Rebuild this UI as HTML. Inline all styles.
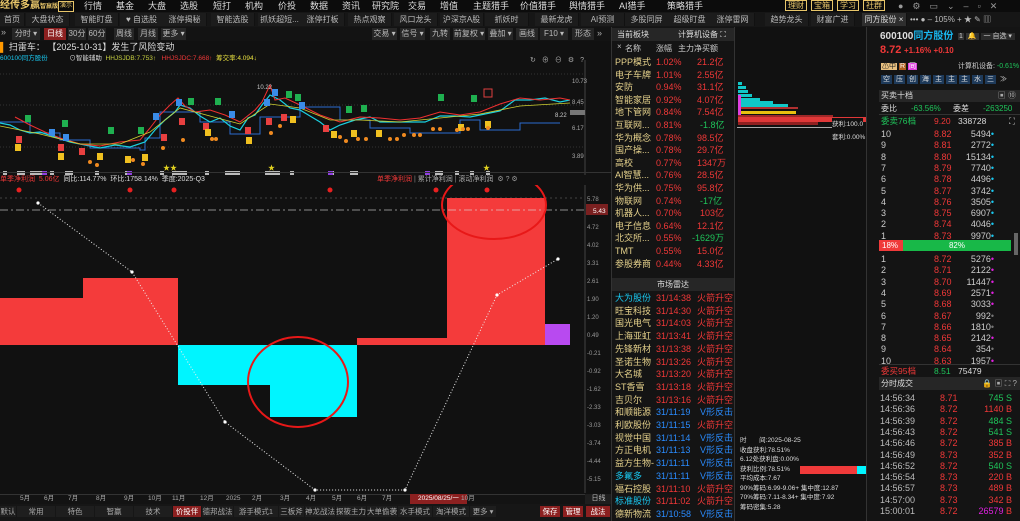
<!DOCTYPE html><html><head><meta charset="utf-8"><style>
*{margin:0;padding:0;box-sizing:border-box}
body{width:1020px;height:521px;background:#111;overflow:hidden;position:relative;font-family:"Liberation Sans","Noto Sans CJK SC",sans-serif;font-size:9px;color:#ccc}
.a{position:absolute;white-space:nowrap}
.r{color:#f03838}.g{color:#1fc45a}.c{color:#19c8f0}.y{color:#e6d28c}.w{color:#ddd}.b{color:#2a8cff}
.tab{position:absolute;top:13px;height:13px;background:#1c1c1c;color:#bbb;font-size:8px;line-height:13px;text-align:center;border-right:1px solid #111;width:44px}
.btn{position:absolute;top:28px;height:12px;background:#262626;color:#bbb;font-size:8px;line-height:12px;text-align:center}
.row{position:absolute;left:0;width:100%;height:12px;line-height:12px;font-size:9px}
.bt{position:absolute;top:506px;height:11px;background:#1e1e1e;color:#aaa;font-size:7.5px;line-height:11px;text-align:center}
.m{position:absolute;top:0;line-height:12px;font-size:9px;color:#ddd}
</style></head><body>
<!-- top menu -->
<div class="a" style="left:0;top:0;width:1020px;height:12px;background:#0c0c0c"></div>
<div class="a y" style="left:0;top:0;font-size:10px;font-weight:bold;line-height:12px;color:#e8c66a">经传多赢<span style="font-size:6px">智赢版</span></div>
<div class="a" style="top:1px;left:58px;border:1px solid #e8c66a;font-size:6px;color:#e8c66a;padding:0 1px;line-height:9px">演示</div>
<span class="m" style="left:84px">行情</span><span class="m" style="left:116px">基金</span><span class="m" style="left:148px">大盘</span><span class="m" style="left:180px">选股</span><span class="m" style="left:213px">短打</span><span class="m" style="left:245px">机构</span><span class="m" style="left:278px">价投</span><span class="m" style="left:310px">数据</span><span class="m" style="left:342px">资讯</span><span class="m" style="left:372px">研究院</span><span class="m" style="left:408px">交易</span><span class="m" style="left:440px">增值</span>
<span class="m y" style="left:473px">主题猎手</span><span class="m y" style="left:520px">价值猎手</span><span class="m y" style="left:569px">舆情猎手</span><span class="m y" style="left:619px">AI猎手</span><span class="m y" style="left:667px">策略猎手</span>
<div class="a" style="left:785px;top:1px;font-size:8px;color:#e8c66a;line-height:9px"><span style="border:1px solid #e8c66a;padding:0 2px;margin-right:4px">理财</span><span style="border:1px solid #e8c66a;padding:0 2px;margin-right:4px">宝箱</span><span style="border:1px solid #e8c66a;padding:0 2px;margin-right:4px">学习</span><span style="border:1px solid #e8c66a;padding:0 2px">社群</span></div>
<div class="a" style="left:898px;top:0;color:#999;font-size:9px;line-height:12px;letter-spacing:9px">●⚙▭⌄–▫✕</div>
<!-- tabs -->
<div class="a" style="left:0;top:12px;width:1020px;height:15px;background:#161616"></div>
<div class="tab" style="left:0;width:25px">首页</div><div class="tab" style="left:26px">大盘状态</div><div class="tab" style="left:75px">智能盯盘</div><div class="tab" style="left:120px">♥ 自选股</div><div class="tab" style="left:163px">涨停揭秘</div><div class="tab" style="left:211px">智能选股</div><div class="tab" style="left:258px">抓妖超短...</div><div class="tab" style="left:301px">涨停打板</div><div class="tab" style="left:348px">热点观察</div><div class="tab" style="left:394px">风口龙头</div><div class="tab" style="left:440px">沪深京A股</div><div class="tab" style="left:485px">抓妖时</div><div class="tab" style="left:535px">最新龙虎</div><div class="tab" style="left:581px">AI预测</div><div class="tab" style="left:625px">多股同屏</div><div class="tab" style="left:668px">超级盯盘</div><div class="tab" style="left:711px">涨停雷网</div><div class="tab" style="left:765px">趋势龙头</div><div class="tab" style="left:811px">财富广进</div>
<div class="tab" style="left:862px;width:45px;background:#2e2e2e;color:#ddd">同方股份 ×</div>
<div class="a" style="left:910px;top:13px;font-size:8px;color:#bbb;line-height:13px">••• ● – 105% + ★ ✎ ▥</div>
<!-- toolbar -->
<div class="a" style="left:0;top:27px;width:612px;height:14px;background:#131313"></div>
<div class="a" style="left:1px;top:27px;color:#aaa;font-size:9px">»</div>
<div class="btn" style="left:12px;width:28px">分时 ▾</div><div class="btn" style="left:44px;width:22px;background:#8c2020;color:#fff">日线</div><div class="btn" style="left:68px;width:18px">30分</div><div class="btn" style="left:88px;width:18px">60分</div><div class="btn" style="left:114px;width:20px">周线</div><div class="btn" style="left:138px;width:20px">月线</div><div class="btn" style="left:161px;width:25px">更多 ▾</div>
<div class="btn" style="left:372px;width:25px">交易 ▾</div><div class="btn" style="left:400px;width:25px">信号 ▾</div><div class="btn" style="left:430px;width:20px">九转</div><div class="btn" style="left:453px;width:32px">前复权 ▾</div><div class="btn" style="left:488px;width:25px">叠加 ▾</div><div class="btn" style="left:516px;width:22px">画线</div><div class="btn" style="left:540px;width:28px">F10 ▾</div><div class="btn" style="left:572px;width:22px">形态</div><div class="a" style="left:597px;top:28px;color:#aaa">»</div>
<div class="a" style="left:0;top:41px;font-size:9px;line-height:12px;color:#ddd"><span style="color:#f90">▌</span> 扫雷车： 【2025-10-31】发生了风险变动</div>
<div class="a" style="left:0;top:55px;font-size:6.5px;line-height:8px"><span class="c">600100同方股份</span> &nbsp;&nbsp;&nbsp;&nbsp;&nbsp;&nbsp;&nbsp;&nbsp;&nbsp;&nbsp;&nbsp;<span class="w">⊙智能辅助</span> &nbsp;<span style="color:#c8d040">HHJSJDB:7.753↑</span> &nbsp;&nbsp;<span class="r">HHJSJDC:7.668↑</span> &nbsp;<span style="color:#e8e040">筹交率:4.094↓</span></div>
<div class="a" style="left:530px;top:55px;color:#aaa;font-size:7px;letter-spacing:6px">↻⊕⊖⚙?</div>
<!-- upper chart -->
<svg class="a" style="left:0;top:60px" width="612" height="115">
<line x1="0" y1="87" x2="585" y2="87" stroke="#333" stroke-dasharray="1 2"/>
<line x1="0" y1="14" x2="585" y2="14" stroke="#333" stroke-dasharray="1 2"/>
<line x1="0" y1="45" x2="585" y2="45" stroke="#333" stroke-dasharray="1 2"/>
<line x1="585" y1="0" x2="585" y2="115" stroke="#444"/>
<polyline fill="none" stroke="#2a6cd0" stroke-width="1" points="0,62 30,62 30,73 60,73 60,80 90,80 90,88 140,88 140,90 145,90 145,78 160,78 160,52 200,52 200,62 230,62 230,74 260,74 260,57 300,57 300,47 340,47 340,60 370,60 370,68 410,68 410,73 460,73 460,60 480,60 480,70 520,70 520,63 560,63"/>
<polyline fill="none" stroke="#1ad0e0" stroke-width="1.2" points="0,63 10,65 20,70 30,73 40,72 55,77 70,82 85,85 100,88 115,85 130,87 145,82 155,70 165,60 175,52 180,45 190,48 200,56 210,62 220,58 230,66 240,70 248,58 255,55 262,45 270,35 280,40 290,48 300,50 310,56 320,62 330,70 340,65 355,60 370,57 380,62 395,62 410,62 425,62 440,56 455,56 470,57 485,54 500,51 515,40 530,40 545,38 560,42 570,40"/>
<polyline fill="none" stroke="#f03030" stroke-width="1" points="15,57 30,65 45,72 60,78 80,84 100,86 120,82 140,80 150,68 160,55 170,45 178,38 185,46 195,52 210,50 225,55 240,62 255,50 262,42 270,25 275,40 285,38 300,45 320,55 340,62 360,57 380,58 400,60 420,58 440,52 460,55 480,52 500,44 520,38 540,40 560,38 570,40"/>
<polyline fill="none" stroke="#d0d030" stroke-width="0.8" points="0,66 40,74 80,84 120,84 150,72 180,48 210,56 240,64 270,44 300,48 330,60 360,60 400,62 440,58 480,54 520,46 570,43"/>
<text x="572" y="23" fill="#aaa" font-size="6">10.73</text><text x="572" y="44" fill="#aaa" font-size="6">8.45</text><text x="572" y="70" fill="#aaa" font-size="6">6.17</text><text x="572" y="98" fill="#aaa" font-size="6">3.89</text>
<rect x="570" y="50" width="15" height="5" fill="#777"/>
<text x="555" y="57" fill="#ccc" font-size="6">8.22</text>
<text x="257" y="29" fill="#ccc" font-size="6">10.22</text>
<g>
<g fill="#1fb050"><rect x="25" y="55" width="6" height="7"/><rect x="62" y="60" width="6" height="7"/><rect x="108" y="67" width="6" height="7"/><rect x="138" y="67" width="6" height="7"/><rect x="188" y="38" width="6" height="7"/><rect x="215" y="38" width="6" height="7"/><rect x="286" y="31" width="6" height="7"/><rect x="295" y="34" width="6" height="7"/><rect x="346" y="46" width="6" height="7"/><rect x="361" y="45" width="6" height="7"/><rect x="438" y="34" width="6" height="7"/><rect x="471" y="35" width="6" height="7"/></g>
<g fill="#3a8ce8"><rect x="49" y="69" width="6" height="7"/><rect x="63" y="74" width="6" height="7"/><rect x="153" y="53" width="6" height="7"/><rect x="176" y="39" width="6" height="7"/><rect x="229" y="51" width="6" height="7"/><rect x="264" y="39" width="6" height="7"/><rect x="272" y="29" width="6" height="7"/><rect x="299" y="42" width="6" height="7"/></g>
<g fill="#e84040"><rect x="16" y="76" width="6" height="7"/><rect x="58" y="84" width="6" height="7"/><rect x="79" y="88" width="6" height="7"/><rect x="161" y="74" width="6" height="7"/><rect x="179" y="58" width="6" height="7"/><rect x="203" y="63" width="6" height="7"/><rect x="245" y="67" width="6" height="7"/><rect x="266" y="58" width="6" height="7"/><rect x="281" y="54" width="6" height="7"/><rect x="323" y="65" width="6" height="7"/></g>
<g fill="#f0c020"><rect x="15" y="84" width="6" height="7"/><rect x="58" y="93" width="6" height="7"/><rect x="97" y="93" width="6" height="7"/><rect x="125" y="96" width="6" height="7"/><rect x="142" y="94" width="6" height="7"/><rect x="205" y="69" width="6" height="7"/><rect x="246" y="77" width="6" height="7"/><rect x="290" y="56" width="6" height="7"/><rect x="331" y="71" width="6" height="7"/><rect x="351" y="70" width="6" height="7"/><rect x="376" y="70" width="6" height="7"/><rect x="458" y="64" width="6" height="7"/><rect x="485" y="61" width="6" height="7"/></g>
</g>
<g fill="#f08a20"><circle cx="90" cy="102" r="2"/><circle cx="97" cy="105" r="2"/><circle cx="133" cy="100" r="2"/><circle cx="143" cy="104" r="2"/><circle cx="163" cy="88" r="2"/><circle cx="183" cy="80" r="2"/><circle cx="212" cy="79" r="2"/><circle cx="216" cy="79" r="2"/><circle cx="271" cy="73" r="2"/><circle cx="280" cy="66" r="2"/><circle cx="340" cy="77" r="2"/><circle cx="346" cy="81" r="2"/><circle cx="358" cy="79" r="2"/><circle cx="366" cy="79" r="2"/><circle cx="390" cy="79" r="2"/><circle cx="397" cy="79" r="2"/><circle cx="404" cy="75" r="2"/><circle cx="414" cy="75" r="2"/><circle cx="420" cy="75" r="2"/><circle cx="433" cy="69" r="2"/><circle cx="440" cy="69" r="2"/><circle cx="457" cy="70" r="2"/><circle cx="463" cy="69" r="2"/><circle cx="468" cy="69" r="2"/><circle cx="488" cy="68" r="2"/></g>
<rect x="484" y="29" width="8" height="8" fill="none" stroke="#e04040"/>
<g fill="#e0d020" font-size="7"><text x="163" y="110">★★</text><text x="268" y="110">★</text><text x="483" y="110">★</text></g>
<g fill="#bbb"><rect x="3" y="111" width="4" height="4"/><rect x="17" y="111" width="8" height="4"/><rect x="30" y="111" width="15" height="4"/><rect x="50" y="111" width="4" height="4"/><rect x="65" y="111" width="8" height="4"/><rect x="95" y="111" width="4" height="4"/><rect x="125" y="111" width="4" height="4"/><rect x="160" y="111" width="4" height="4"/><rect x="172" y="111" width="15" height="4"/><rect x="205" y="111" width="4" height="4"/><rect x="225" y="111" width="15" height="4"/><rect x="265" y="111" width="15" height="4"/><rect x="290" y="111" width="4" height="4"/><rect x="330" y="111" width="4" height="4"/><rect x="350" y="111" width="8" height="4"/><rect x="435" y="111" width="8" height="4"/><rect x="455" y="111" width="4" height="4"/><rect x="470" y="111" width="4" height="4"/><rect x="486" y="111" width="4" height="4"/></g>
<g fill="#9040e0"><rect x="42" y="111" width="5" height="4"/><rect x="127" y="111" width="5" height="4"/><rect x="328" y="111" width="5" height="4"/><rect x="425" y="111" width="5" height="4"/></g>
</svg>
<div class="a" style="left:0;top:172px;width:612px;height:1px;background:#333"></div>
<!-- lower chart -->
<div class="a" style="left:0;top:175px;font-size:7px;line-height:9px"><span class="r">单季净利润</span> &nbsp;<span class="r">5.06亿</span> &nbsp;<span class="w">同比:114.77% &nbsp;环比:1758.14% &nbsp;季度:2025-Q3</span></div>
<div class="a" style="left:377px;top:175px;font-size:7px;line-height:9px"><span class="r">单季净利润</span> <span style="color:#888">|</span> <span style="color:#aaa">累计净利润</span> <span style="color:#888">|</span> <span style="color:#aaa">滚动净利润</span> &nbsp;<span style="color:#999">⚙ ? ⚙</span></div>
<svg class="a" style="left:0;top:185px" width="612" height="308">
<line x1="0" y1="13" x2="585" y2="13" stroke="#444" stroke-dasharray="2 3"/>
<line x1="585" y1="0" x2="585" y2="308" stroke="#444"/>
<rect x="0" y="113" width="83" height="47" fill="#f43b3b"/>
<rect x="83" y="93" width="95" height="67" fill="#f43b3b"/>
<rect x="178" y="160" width="92" height="40" fill="#00f5ff"/>
<rect x="270" y="160" width="87" height="72" fill="#00f5ff"/>
<rect x="357" y="153" width="90" height="7" fill="#f43b3b"/>
<rect x="447" y="13" width="98" height="147" fill="#f43b3b"/>
<rect x="545" y="139" width="25" height="21" fill="#b84af0"/>
<line x1="0" y1="25" x2="585" y2="25" stroke="#ddd" stroke-dasharray="8 3 2 3" opacity=".6"/>
<polyline fill="none" stroke="#eee" stroke-width="1" stroke-dasharray="1 2" points="38,18 132,87 225,237 315,305 405,305 497,110 558,74"/>
<g fill="#fff"><circle cx="38" cy="18" r="1.6"/><circle cx="132" cy="87" r="1.6"/><circle cx="225" cy="237" r="1.6"/><circle cx="315" cy="305" r="1.6"/><circle cx="405" cy="305" r="1.6"/><circle cx="497" cy="110" r="1.6"/><circle cx="558" cy="74" r="1.6"/></g>
<ellipse cx="494" cy="20" rx="52" ry="34" fill="none" stroke="#e81818" stroke-width="2"/>
<ellipse cx="298" cy="197" rx="50" ry="45" fill="none" stroke="#e81818" stroke-width="2"/>
<g fill="#e82020"><circle cx="19" cy="5" r="2.5"/><circle cx="130" cy="5" r="2.5"/><circle cx="174" cy="5" r="2.5"/><circle cx="330" cy="5" r="2.5"/><circle cx="436" cy="5" r="2.5"/><circle cx="487" cy="5" r="2.5"/></g>
<rect x="586" y="19" width="22" height="11" fill="#7a2020"/>
<text x="593" y="28" fill="#fff" font-size="6.5">5.43</text>
<g fill="#999" font-size="6"><text x="587" y="16">5.78</text><text x="587" y="44">4.72</text><text x="587" y="62">4.02</text><text x="587" y="80">3.31</text><text x="587" y="98">2.61</text><text x="587" y="116">1.90</text><text x="587" y="134">1.20</text><text x="587" y="152">0.49</text><text x="587" y="170">-0.21</text><text x="587" y="188">-0.92</text><text x="587" y="206">-1.62</text><text x="587" y="224">-2.33</text><text x="587" y="242">-3.03</text><text x="587" y="260">-3.74</text><text x="587" y="278">-4.44</text><text x="587" y="296">-5.15</text></g>
</svg>
<!-- date axis -->
<div class="a" style="left:0;top:494px;width:612px;height:10px;background:#131313;border-top:1px solid #333"></div>
<div class="a" style="left:0;top:494px;font-size:6.5px;line-height:10px;color:#aaa;width:612px">
<span class="a" style="left:20px">5月</span><span class="a" style="left:44px">6月</span><span class="a" style="left:68px">7月</span><span class="a" style="left:96px">8月</span><span class="a" style="left:124px">9月</span><span class="a" style="left:148px">10月</span><span class="a" style="left:172px">11月</span><span class="a" style="left:200px">12月</span><span class="a" style="left:226px">2025</span><span class="a" style="left:252px">2月</span><span class="a" style="left:280px">3月</span><span class="a" style="left:306px">4月</span><span class="a" style="left:332px">5月</span><span class="a" style="left:357px">6月</span><span class="a" style="left:382px">7月</span><span class="a" style="left:410px;background:#8c2020;color:#fff;padding:0 8px">2025/08/25/一</span><span class="a" style="left:461px">10月</span></div>
<div class="a" style="left:585px;top:494px;width:27px;height:10px;background:#1e1e1e;font-size:7px;line-height:10px;text-align:center;color:#bbb">日线</div>
<!-- bottom tabs -->
<div class="a" style="left:0;top:504px;width:612px;height:17px;background:#161616"></div>
<div class="bt" style="left:0;width:16px">默认</div><div class="bt" style="left:17px;width:38px">常用</div><div class="bt" style="left:56px;width:38px">特色</div><div class="bt" style="left:95px;width:38px">智赢</div><div class="bt" style="left:134px;width:38px">技术</div><div class="bt" style="left:173px;width:28px;background:#8c2020;color:#fff">价投伴</div><div class="bt" style="left:202px;width:31px">德邦战法</div><div class="bt" style="left:234px;width:44px">游手模式1</div><div class="bt" style="left:279px;width:25px">三板斧</div><div class="bt" style="left:305px;width:30px">神龙战法</div><div class="bt" style="left:336px;width:30px">探筱主力</div><div class="bt" style="left:367px;width:30px">大单偷袭</div><div class="bt" style="left:398px;width:34px">水手模式</div><div class="bt" style="left:433px;width:36px">淘洋模式</div><div class="bt" style="left:470px;width:26px">更多 ▾</div>
<div class="bt" style="left:540px;width:20px;background:#8c2020;color:#fff">保存</div><div class="bt" style="left:563px;width:20px;background:#8c2020;color:#fff">管理</div><div class="bt" style="left:586px;width:24px;background:#8c2020;color:#fff">战法</div>
<!-- middle panel -->
<div class="a" style="left:611px;top:27px;width:124px;height:494px;background:#141414;border-left:1px solid #333;border-right:1px solid #333"></div>
<div class="a" style="left:612px;top:28px;width:122px;height:13px;background:#262626;font-size:8px;line-height:13px;color:#ddd;padding-left:5px">当前板块<span style="position:absolute;left:66px">计算机设备 ⛶</span></div>
<div class="a" style="left:612px;top:41px;width:122px;height:12px;font-size:8px;line-height:12px;color:#bbb"><span class="a" style="left:5px">×</span></div>
<div class="a" style="left:612px;top:44px;width:122px;font-size:8px;color:#ccc;line-height:10px"><span class="a" style="left:13px">名称</span><span class="a" style="left:44px">涨幅</span><span class="a" style="left:66px">主力净买额</span></div>
<div class="a" style="left:615px;top:56px;width:118px;height:220px;font-size:8.5px">
<div class="row" style="top:0"><span class="y">PPP模式</span><span class="a r" style="left:41px">1.02%</span><span class="a r" style="left:82px">21.2亿</span></div>
<div class="row" style="top:12.6px"><span class="y">电子车牌</span><span class="a r" style="left:41px">1.01%</span><span class="a r" style="left:82px">2.55亿</span></div>
<div class="row" style="top:25.2px"><span class="y">安防</span><span class="a r" style="left:41px">0.94%</span><span class="a r" style="left:82px">31.1亿</span></div>
<div class="row" style="top:37.8px"><span class="y">智能家居</span><span class="a r" style="left:41px">0.92%</span><span class="a r" style="left:82px">4.07亿</span></div>
<div class="row" style="top:50.4px"><span class="y">地下管网</span><span class="a r" style="left:41px">0.84%</span><span class="a r" style="left:82px">7.54亿</span></div>
<div class="row" style="top:63px"><span class="y">互联网...</span><span class="a r" style="left:41px">0.81%</span><span class="a g" style="left:85px">-1.8亿</span></div>
<div class="row" style="top:75.6px"><span class="y">华为概念</span><span class="a r" style="left:41px">0.78%</span><span class="a r" style="left:82px">98.5亿</span></div>
<div class="row" style="top:88.2px"><span class="y">国产操...</span><span class="a r" style="left:41px">0.78%</span><span class="a r" style="left:82px">29.7亿</span></div>
<div class="row" style="top:100.8px"><span class="y">高校</span><span class="a r" style="left:41px">0.77%</span><span class="a r" style="left:82px">1347万</span></div>
<div class="row" style="top:113.4px"><span class="y">AI智慧...</span><span class="a r" style="left:41px">0.76%</span><span class="a r" style="left:82px">28.5亿</span></div>
<div class="row" style="top:126px"><span class="y">华为供...</span><span class="a r" style="left:41px">0.75%</span><span class="a r" style="left:82px">95.8亿</span></div>
<div class="row" style="top:138.6px"><span class="y">物联网</span><span class="a r" style="left:41px">0.74%</span><span class="a g" style="left:85px">-17亿</span></div>
<div class="row" style="top:151.2px"><span class="y">机器人...</span><span class="a r" style="left:41px">0.70%</span><span class="a r" style="left:85px">103亿</span></div>
<div class="row" style="top:163.8px"><span class="y">电子信息</span><span class="a r" style="left:41px">0.64%</span><span class="a r" style="left:82px">12.1亿</span></div>
<div class="row" style="top:176.4px"><span class="y">北交所...</span><span class="a r" style="left:41px">0.55%</span><span class="a g" style="left:77px">-1629万</span></div>
<div class="row" style="top:189px"><span class="y">TMT</span><span class="a r" style="left:41px">0.55%</span><span class="a r" style="left:82px">15.0亿</span></div>
<div class="row" style="top:201.6px"><span class="y">参股券商</span><span class="a r" style="left:41px">0.44%</span><span class="a r" style="left:82px">4.33亿</span></div>
</div>
<div class="a" style="left:612px;top:278px;width:122px;height:13px;background:#262626;font-size:8px;line-height:13px;color:#ddd;text-align:center">市场雷达</div>
<div class="a" style="left:615px;top:292px;width:118px;height:229px;font-size:8.5px">
<div class="row" style="top:0"><span class="c">大为股份</span><span class="a r" style="left:41px">31/14:38</span><span class="a r" style="left:82px">火箭升空</span></div>
<div class="row" style="top:12.7px"><span class="y">旺宝科技</span><span class="a r" style="left:41px">31/14:30</span><span class="a r" style="left:82px">火箭升空</span></div>
<div class="row" style="top:25.4px"><span class="y">国光电气</span><span class="a r" style="left:41px">31/14:03</span><span class="a r" style="left:82px">火箭升空</span></div>
<div class="row" style="top:38.1px"><span class="y">上海亚虹</span><span class="a r" style="left:41px">31/13:41</span><span class="a r" style="left:82px">火箭升空</span></div>
<div class="row" style="top:50.8px"><span class="y">先锋新材</span><span class="a r" style="left:41px">31/13:38</span><span class="a r" style="left:82px">火箭升空</span></div>
<div class="row" style="top:63.5px"><span class="y">圣诺生物</span><span class="a r" style="left:41px">31/13:26</span><span class="a r" style="left:82px">火箭升空</span></div>
<div class="row" style="top:76.2px"><span class="y">大名城</span><span class="a r" style="left:41px">31/13:20</span><span class="a r" style="left:82px">火箭升空</span></div>
<div class="row" style="top:88.9px"><span class="y">ST香雪</span><span class="a r" style="left:41px">31/13:18</span><span class="a r" style="left:82px">火箭升空</span></div>
<div class="row" style="top:101.6px"><span class="y">吉贝尔</span><span class="a r" style="left:41px">31/13:16</span><span class="a r" style="left:82px">火箭升空</span></div>
<div class="row" style="top:114.3px"><span class="y">和顺能源</span><span class="a b" style="left:41px">31/11:19</span><span class="a b" style="left:85px">V形反击</span></div>
<div class="row" style="top:127px"><span class="y">利欧股份</span><span class="a b" style="left:41px">31/11:15</span><span class="a r" style="left:82px">火箭升空</span></div>
<div class="row" style="top:139.7px"><span class="y">视觉中国</span><span class="a b" style="left:41px">31/11:14</span><span class="a b" style="left:85px">V形反击</span></div>
<div class="row" style="top:152.4px"><span class="y">方正电机</span><span class="a b" style="left:41px">31/11:13</span><span class="a b" style="left:85px">V形反击</span></div>
<div class="row" style="top:165.1px"><span class="y">益方生物-</span><span class="a b" style="left:41px">31/11:11</span><span class="a b" style="left:85px">V形反击</span></div>
<div class="row" style="top:177.8px"><span class="c">多氟多</span><span class="a b" style="left:41px">31/11:11</span><span class="a b" style="left:85px">V形反击</span></div>
<div class="row" style="top:190.5px"><span class="y">福石控股</span><span class="a r" style="left:41px">31/11:10</span><span class="a r" style="left:82px">火箭升空</span></div>
<div class="row" style="top:203.2px"><span class="c">标准股份</span><span class="a r" style="left:41px">31/11:02</span><span class="a r" style="left:82px">火箭升空</span></div>
<div class="row" style="top:215.9px"><span class="y">德新物流</span><span class="a b" style="left:41px">31/10:58</span><span class="a b" style="left:85px">V形反击</span></div>
</div>
<!-- chip distribution -->
<svg class="a" style="left:736px;top:68px" width="130" height="60">
<g fill="#10c8c8"><rect x="2" y="14" width="4" height="3"/><rect x="2" y="18" width="8" height="3"/><rect x="2" y="22" width="10" height="3"/><rect x="2" y="26" width="14" height="3"/><rect x="2" y="30" width="22" height="3"/><rect x="2" y="33" width="35" height="3"/><rect x="2" y="36" width="50" height="3"/></g>
<rect x="2" y="39" width="60" height="2" fill="#b03030"/>
<rect x="2" y="43" width="58" height="3" fill="#e8c010"/>
<rect x="2" y="47" width="95" height="2" fill="#a02828"/>
<rect x="2" y="49" width="128" height="5" fill="#e03838"/>
<rect x="2" y="54" width="80" height="3" fill="#902020"/>
<rect x="2" y="27" width="3" height="20" fill="#e040e0"/>
</svg>
<div class="a" style="left:737px;top:127px;width:110px;height:1px;background:#aaa"></div>
<div class="a" style="left:832px;top:118px;font-size:6.5px;color:#ddd;background:#111">获利:100.0</div>
<div class="a" style="left:832px;top:131px;font-size:6.5px;color:#ddd">套利:0.00%</div>
<div class="a" style="left:740px;top:436px;font-size:6.5px;line-height:9.5px;color:#ddd">时 &nbsp;&nbsp;&nbsp;&nbsp;&nbsp;&nbsp;间:2025-08-25<br>收盘获利:78.51%<br>6.12处获利盘:0.00%<br>获利比例:78.51%<br>平均成本:7.67<br>90%筹码:6.99-9.06+ 集中度:12.87<br>70%筹码:7.11-8.34+ 集中度:7.92<br>筹码密集:5.28</div>
<div class="a" style="left:800px;top:466px;width:57px;height:8px;background:#f03a3a"></div>
<div class="a" style="left:857px;top:466px;width:14px;height:8px;background:#00f5ff"></div>
<!-- right panel -->
<div class="a" style="left:866px;top:27px;width:154px;height:494px;background:#141414;border-left:1px solid #333"></div>
<div class="a" style="left:880px;top:31px;font-size:10px;font-weight:bold;line-height:12px"><span class="w">600100</span><span style="color:#19b8f0">同方股份</span></div>
<div class="a" style="left:958px;top:32px;font-size:7px;color:#ccc;line-height:10px"><span style="background:#333;padding:0 1px">1</span> <span style="background:#333;padding:0 2px">🔔</span> <span style="background:#2a2a2a;padding:0 3px">一 自选 ▾</span></div>
<div class="a r" style="left:880px;top:44px;line-height:12px;font-weight:bold"><span style="font-size:11px">8.72</span> <span style="font-size:8px">+1.16% +0.10</span></div>
<div class="a" style="left:881px;top:62px;font-size:7px;line-height:9px"><span style="background:#e8c080;color:#222;padding:0 1px">⚠中</span> <span style="background:#b06020;color:#fff;padding:0 1px">R</span> <span style="background:#e040e0;color:#fff;padding:0 1px">同</span></div>
<div class="a" style="left:958px;top:62px;font-size:7px;line-height:9px;color:#ccc">计算机设备: <span class="g">-0.61%</span></div>
<div class="a" style="left:881px;top:75px;font-size:7px;line-height:9px;color:#ddd">
<span style="display:inline-block;width:11px;background:#1e3a5a;text-align:center;margin-right:2px">空</span><span style="display:inline-block;width:11px;background:#1e3a5a;text-align:center;margin-right:2px">压</span><span style="display:inline-block;width:11px;background:#1e3a5a;text-align:center;margin-right:2px">创</span><span style="display:inline-block;width:11px;background:#1e3a5a;text-align:center;margin-right:2px">海</span><span style="display:inline-block;width:11px;background:#1e3a5a;text-align:center;margin-right:2px">主</span><span style="display:inline-block;width:11px;background:#1e3a5a;text-align:center;margin-right:2px">主</span><span style="display:inline-block;width:11px;background:#1e3a5a;text-align:center;margin-right:2px">主</span><span style="display:inline-block;width:11px;background:#1e3a5a;text-align:center;margin-right:2px">水</span><span style="display:inline-block;width:11px;background:#1e3a5a;text-align:center;margin-right:2px">三</span> ≫</div>
<div class="a" style="left:879px;top:90px;width:141px;height:12px;background:#262626;font-size:8px;line-height:12px;color:#ddd;padding-left:2px">买卖十档<span style="position:absolute;right:4px;color:#aaa">▣ ⑩</span></div>
<div class="a" style="left:881px;top:104px;width:138px;font-size:8px;line-height:10px"><span class="w">委比</span><span class="a g" style="left:30px">-63.56%</span><span class="a w" style="left:72px">委差</span><span class="a g" style="left:102px">-263250</span></div>
<div class="a" style="left:879px;top:114px;width:141px;height:1px;background:#333"></div>
<div class="a" style="left:881px;top:116px;width:138px;font-size:8.5px;line-height:10px"><span class="g">委卖76档</span><span class="a r" style="left:53px">9.20</span><span class="a w" style="left:77px">338728</span><span class="a w" style="left:128px">⛶</span></div>
<div class="a" style="left:881px;top:128px;width:138px;font-size:8.5px;color:#ccc">
<div class="row" style="top:0">10<span class="a r" style="left:53px">8.82</span><span class="a" style="left:80px;width:33px;text-align:right">5494<span class="c">•</span></span></div>
<div class="row" style="top:11.3px">9<span class="a r" style="left:53px">8.81</span><span class="a" style="left:80px;width:33px;text-align:right">2772<span class="c">•</span></span></div>
<div class="row" style="top:22.6px">8<span class="a r" style="left:53px">8.80</span><span class="a" style="left:80px;width:33px;text-align:right">15134<span class="c">•</span></span></div>
<div class="row" style="top:33.9px">7<span class="a r" style="left:53px">8.79</span><span class="a" style="left:80px;width:33px;text-align:right">7740<span class="c">•</span></span></div>
<div class="row" style="top:45.2px">6<span class="a r" style="left:53px">8.78</span><span class="a" style="left:80px;width:33px;text-align:right">4496<span class="c">•</span></span></div>
<div class="row" style="top:56.5px">5<span class="a r" style="left:53px">8.77</span><span class="a" style="left:80px;width:33px;text-align:right">3742<span class="c">•</span></span></div>
<div class="row" style="top:67.8px">4<span class="a r" style="left:53px">8.76</span><span class="a" style="left:80px;width:33px;text-align:right">3505<span class="c">•</span></span></div>
<div class="row" style="top:79.1px">3<span class="a r" style="left:53px">8.75</span><span class="a" style="left:80px;width:33px;text-align:right">6907<span class="c">•</span></span></div>
<div class="row" style="top:90.4px">2<span class="a r" style="left:53px">8.74</span><span class="a" style="left:80px;width:33px;text-align:right">4046<span class="c">•</span></span></div>
<div class="row" style="top:101.7px">1<span class="a r" style="left:53px">8.73</span><span class="a" style="left:80px;width:33px;text-align:right">9970<span class="c">•</span></span></div>
</div>
<div class="a" style="left:879px;top:240px;width:24px;height:11px;background:#f03a3a;font-size:8px;line-height:11px;color:#fff;padding-left:3px">18%</div>
<div class="a" style="left:903px;top:240px;width:108px;height:11px;background:#18b848;font-size:8px;line-height:11px;color:#fff;text-align:center">82%</div>
<div class="a" style="left:1014px;top:233px;width:4px;height:22px;background:#666"></div>
<div class="a" style="left:881px;top:253px;width:138px;font-size:8.5px;color:#ccc">
<div class="row" style="top:0">1<span class="a r" style="left:53px">8.72</span><span class="a" style="left:80px;width:33px;text-align:right">5276<span style="color:#e020e0">•</span></span></div>
<div class="row" style="top:11.3px">2<span class="a r" style="left:53px">8.71</span><span class="a" style="left:80px;width:33px;text-align:right">2122<span style="color:#e020e0">•</span></span></div>
<div class="row" style="top:22.6px">3<span class="a r" style="left:53px">8.70</span><span class="a" style="left:80px;width:33px;text-align:right">11447<span style="color:#e020e0">•</span></span></div>
<div class="row" style="top:33.9px">4<span class="a r" style="left:53px">8.69</span><span class="a" style="left:80px;width:33px;text-align:right">2571<span style="color:#e020e0">•</span></span></div>
<div class="row" style="top:45.2px">5<span class="a r" style="left:53px">8.68</span><span class="a" style="left:80px;width:33px;text-align:right">3033<span style="color:#e020e0">•</span></span></div>
<div class="row" style="top:56.5px">6<span class="a r" style="left:53px">8.67</span><span class="a" style="left:80px;width:33px;text-align:right">992<span style="color:#777">•</span></span></div>
<div class="row" style="top:67.8px">7<span class="a r" style="left:53px">8.66</span><span class="a" style="left:80px;width:33px;text-align:right">1810<span style="color:#777">•</span></span></div>
<div class="row" style="top:79.1px">8<span class="a r" style="left:53px">8.65</span><span class="a" style="left:80px;width:33px;text-align:right">2142<span style="color:#e020e0">•</span></span></div>
<div class="row" style="top:90.4px">9<span class="a r" style="left:53px">8.64</span><span class="a" style="left:80px;width:33px;text-align:right">354<span style="color:#777">•</span></span></div>
<div class="row" style="top:101.7px">10<span class="a r" style="left:53px">8.63</span><span class="a" style="left:80px;width:33px;text-align:right">1957<span style="color:#e020e0">•</span></span></div>
</div>
<div class="a" style="left:879px;top:364px;width:141px;height:1px;background:#333"></div>
<div class="a" style="left:881px;top:366px;width:138px;font-size:8.5px;line-height:10px"><span class="r">委买95档</span><span class="a g" style="left:53px">8.51</span><span class="a w" style="left:77px">75479</span></div>
<div class="a" style="left:879px;top:377px;width:141px;height:13px;background:#262626;font-size:8px;line-height:13px;color:#ddd;padding-left:2px">分时成交<span style="position:absolute;right:3px;color:#aaa">🔒 ▣ ⛶ ?</span></div>
<div class="a" style="left:880px;top:392px;width:138px;font-size:8.5px;color:#bbb">
<div class="row" style="top:0">14:56:34<span class="a r" style="left:60px">8.71</span><span class="a g" style="left:90px;width:42px;text-align:right">745 S</span></div>
<div class="row" style="top:11.3px">14:56:36<span class="a r" style="left:60px">8.72</span><span class="a r" style="left:90px;width:42px;text-align:right">1140 B</span></div>
<div class="row" style="top:22.6px">14:56:39<span class="a r" style="left:60px">8.72</span><span class="a g" style="left:90px;width:42px;text-align:right">484 S</span></div>
<div class="row" style="top:33.9px">14:56:43<span class="a r" style="left:60px">8.72</span><span class="a g" style="left:90px;width:42px;text-align:right">541 S</span></div>
<div class="row" style="top:45.2px">14:56:46<span class="a r" style="left:60px">8.72</span><span class="a r" style="left:90px;width:42px;text-align:right">385 B</span></div>
<div class="row" style="top:56.5px">14:56:49<span class="a r" style="left:60px">8.73</span><span class="a r" style="left:90px;width:42px;text-align:right">352 B</span></div>
<div class="row" style="top:67.8px">14:56:52<span class="a r" style="left:60px">8.72</span><span class="a g" style="left:90px;width:42px;text-align:right">540 S</span></div>
<div class="row" style="top:79.1px">14:56:54<span class="a r" style="left:60px">8.73</span><span class="a r" style="left:90px;width:42px;text-align:right">220 B</span></div>
<div class="row" style="top:90.4px">14:56:57<span class="a r" style="left:60px">8.73</span><span class="a r" style="left:90px;width:42px;text-align:right">489 B</span></div>
<div class="row" style="top:101.7px">14:57:00<span class="a r" style="left:60px">8.73</span><span class="a r" style="left:90px;width:42px;text-align:right">342 B</span></div>
<div class="row" style="top:113px">15:00:01<span class="a r" style="left:60px">8.72</span><span class="a" style="left:90px;width:42px;text-align:right"><span style="color:#e020e0">26579</span> <span class="r">B</span></span></div>
</div>
</body></html>
